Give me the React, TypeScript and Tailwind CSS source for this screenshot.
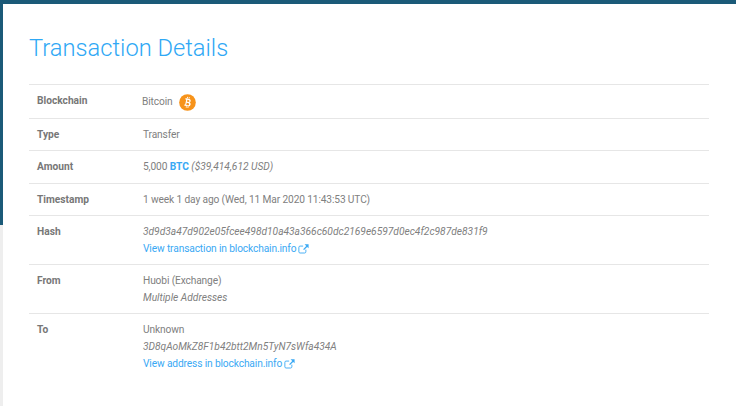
import React from 'react';

const BitcoinIcon = () => (
  <svg viewBox="0 0 18 18" className="ml-[6px] h-[17px] w-[17px]">
    <circle cx="9" cy="9" r="8.8" fill="#f7931a" />
    <path
      fillRule="evenodd"
      d="M6.9 4.2l3.1.7c1.7.4 2.7 1.2 2.4 2.6-.2.8-.6 1.3-1.3 1.5 1 .4 1.4 1.2 1.2 2.2-.4 1.7-1.7 2.2-3.7 1.8l-3.2-.7.3-1.2.8.2 1.1-5.2-.8-.2zM8.9 6l-.4 2.1 1 .2c.8.2 1.4 0 1.5-.7.1-.7-.3-1.1-1.2-1.3zM8.2 9.2l-.5 2.4 1.3.3c1 .2 1.5 0 1.7-.9.2-.9-.4-1.2-1.4-1.5zM8.7 2.9l.9.2-.3 1.3-.9-.2zM10.5 3.3l.9.2-.3 1.3-.9-.2zM7.4 13l.9.2-.3 1.3-.9-.2zM9.2 13.4l.9.2-.3 1.3-.9-.2z"
      fill="#fff"
    />
  </svg>
);

const LinkIcon = () => (
  <svg viewBox="0 0 12 11" className="mb-[1px] ml-[2px] h-[10px] w-[11px]">
    <path d="M8.6 6.2v2.4c0 .8-.5 1.3-1.3 1.3H2.2c-.8 0-1.3-.5-1.3-1.3V3.6c0-.8.5-1.3 1.3-1.3h3.4" fill="none" stroke="#3aa9f4" strokeWidth="1" />
    <path d="M7.2 0.4h4.4v4.4l-1.6-1.5-3.4 3.4-1-1 3.4-3.4z" fill="#3aa9f4" />
  </svg>
);

const Row = ({ label, children }: { label: string; children: React.ReactNode }) => (
  <div className="flex border-t border-[#e6e6e6] px-2 pt-[8px] pb-[6.75px]">
    <div className="w-[106px] shrink-0 font-bold tracking-normal text-[#777777]">{label}</div>
    <div className="flex-1">{children}</div>
  </div>
);

const InfoLink = ({ text }: { text: string }) => (
  <div className="flex items-center text-[#3aa9f4]">
    {text}
    <LinkIcon />
  </div>
);

export default function App() {
  return (
    <div className="flex h-[406px] w-[736px] flex-col overflow-hidden bg-[#1b5a78] pt-[4px] font-['Roboto',sans-serif] text-[10.2px] leading-[16.7px] tracking-[-0.13px] text-[#808080]">
      <div className="flex flex-1">
        <div className="flex w-[3px] flex-col">
          <div className="h-[221px] bg-[#1b5a78]" />
          <div className="flex-1 bg-[#eeeeee]" />
        </div>
        <div className="flex-1 bg-white pr-[27px] pl-[26px]">
          <h1 className="pt-[28px] pb-[20px] text-[23.7px] leading-[32px] font-light tracking-normal text-[#2fa8f5]">Transaction Details</h1>
          <div>
            <Row label="Blockchain">
              <div className="-ml-[1px] flex h-[18px] items-center">
                Bitcoin
                <BitcoinIcon />
              </div>
            </Row>
            <Row label="Type">Transfer</Row>
            <Row label="Amount">
              5,000 <span className="font-bold tracking-normal text-[#3aa9f4]">BTC</span> <span className="tracking-normal italic">($39,414,612 USD)</span>
            </Row>
            <Row label="Timestamp">1 week 1 day ago (Wed, 11 Mar 2020 11:43:53 UTC)</Row>
            <Row label="Hash">
              <div className="tracking-normal italic">3d9d3a47d902e05fcee498d10a43a366c60dc2169e6597d0ec4f2c987de831f9</div>
              <InfoLink text="View transaction in blockchain.info" />
            </Row>
            <Row label="From">
              <div>Huobi (Exchange)</div>
              <div className="tracking-normal italic">Multiple Addresses</div>
            </Row>
            <Row label="To">
              <div>Unknown</div>
              <div className="tracking-normal italic">3D8qAoMkZ8F1b42btt2Mn5TyN7sWfa434A</div>
              <InfoLink text="View address in blockchain.info" />
            </Row>
          </div>
        </div>
      </div>
    </div>
  );
}
